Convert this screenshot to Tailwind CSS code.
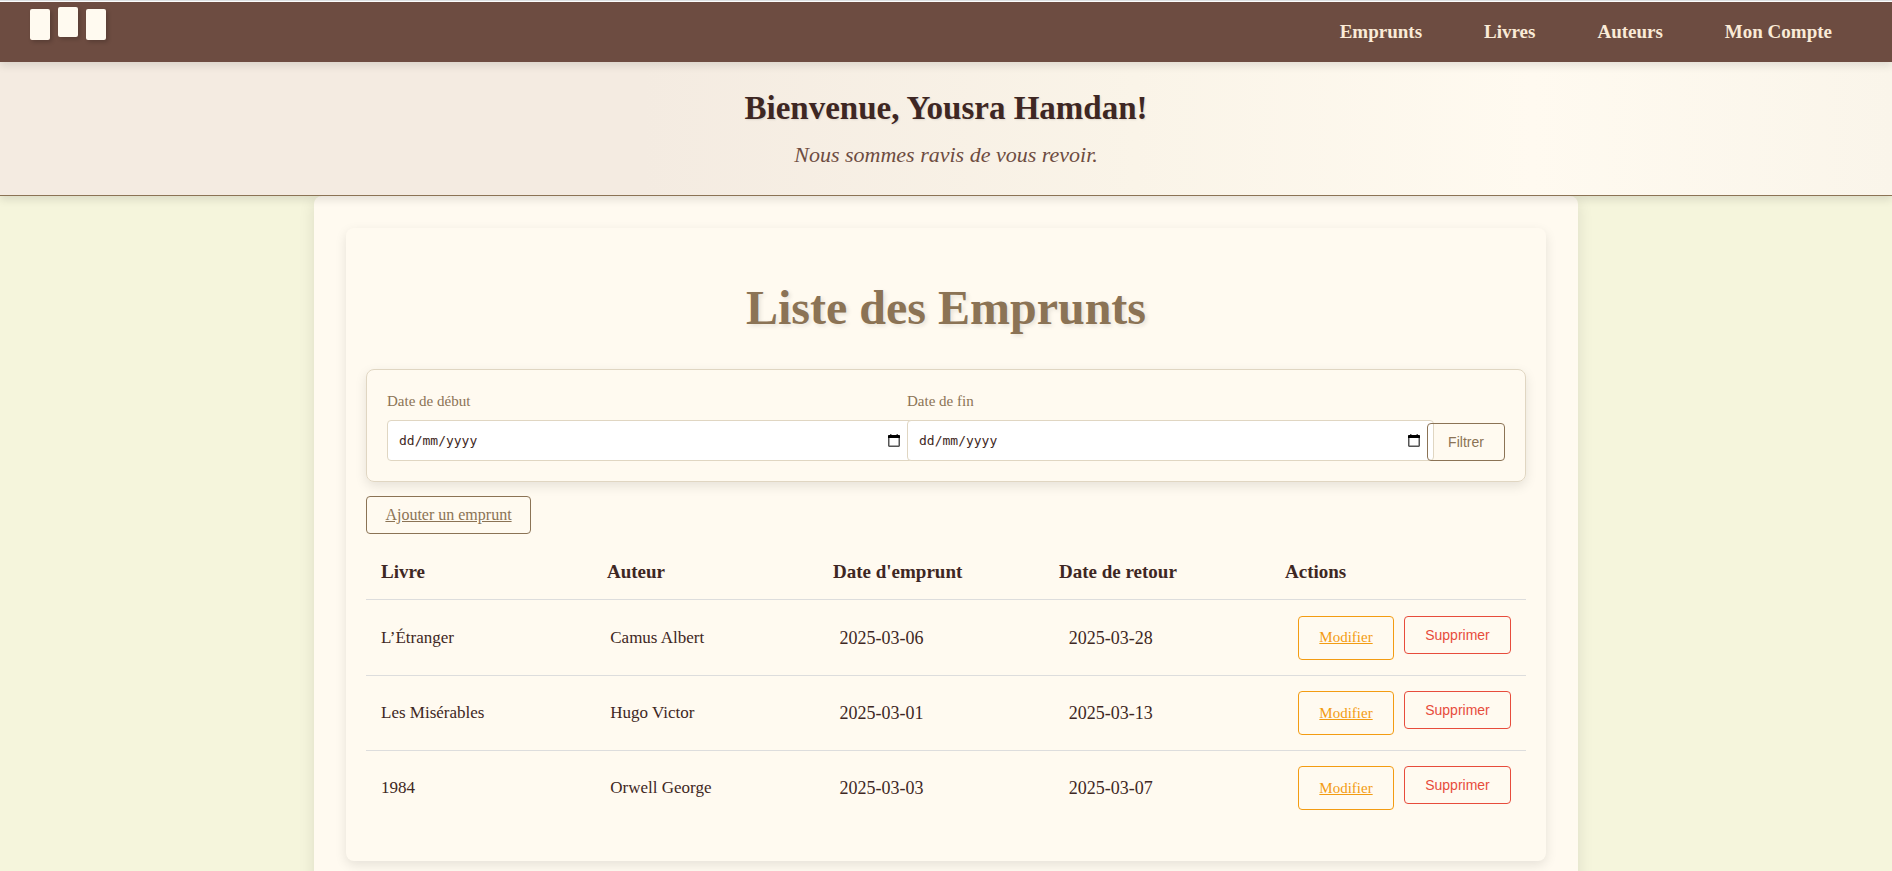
<!DOCTYPE html>
<html lang="fr">
<head>
<meta charset="utf-8">
<meta name="viewport" content="width=device-width, initial-scale=1">
<title>Liste des Emprunts</title>
<script src="https://cdn.jsdelivr.net/npm/@tailwindcss/browser@4"></script>
</head>
<body class="h-screen overflow-hidden bg-[#f5f5dc] font-['Liberation_Serif',serif] text-[#3e2723]">
  <div class="h-0.5 border-b border-white bg-[#dde1e3]"></div>

  <header class="relative z-20 flex h-15 justify-between bg-[#6d4c41] pr-15 pl-[30px] shadow-[0_4px_8px_rgba(0,0,0,0.1)]">
    <a href="#" aria-label="Accueil" class="flex items-start gap-2 pt-[5px]">
      <span class="mt-0.5 h-[31px] w-5 rounded-xs bg-[#fffaf0] shadow-[2px_2px_4px_rgba(0,0,0,0.2)]"></span>
      <span class="h-[30px] w-5 rounded-xs bg-[#fffaf0] shadow-[2px_2px_4px_rgba(0,0,0,0.2)]"></span>
      <span class="mt-0.5 h-[31px] w-5 rounded-xs bg-[#fffaf0] shadow-[2px_2px_4px_rgba(0,0,0,0.2)]"></span>
    </a>
    <nav class="flex items-center gap-[62px] text-[19px] font-bold text-[#faebd7]">
      <a href="#">Emprunts</a>
      <a href="#">Livres</a>
      <a href="#">Auteurs</a>
      <a href="#">Mon Compte</a>
    </nav>
  </header>

  <section class="relative z-10 border-b border-[#8b7355] bg-[linear-gradient(90deg,#f4ebe1_0%,#f4ebe1_34%,#faf4e8_60%,#fffaf0_81%,#faf5ea_100%)] pt-6 pb-6 text-center shadow-[0_4px_8px_rgba(0,0,0,0.1)]">
    <h2 class="text-[33px] leading-[44px] font-bold text-shadow-[1px_1px_2px_rgba(0,0,0,0.1)]">Bienvenue, Yousra Hamdan!</h2>
    <p class="mt-[9px] text-[22px] leading-8 text-[#6d4c41] italic">Nous sommes ravis de vous revoir.</p>
  </section>

  <main class="mx-auto max-w-[1264px] rounded-lg bg-[#fffaf0] p-8 shadow-[0_4px_16px_rgba(0,0,0,0.1)]">
    <div class="rounded-lg bg-[#fffaf0] px-5 pt-[50px] pb-9 shadow-[0_4px_12px_rgba(0,0,0,0.1)]">
      <h1 class="text-center text-5xl leading-[60px] font-bold text-[#8b7355] text-shadow-[2px_2px_4px_rgba(0,0,0,0.1)]">Liste des Emprunts</h1>

      <form class="mt-[31px] flex items-end rounded-lg border border-[#e0d6c2] p-5 shadow-[0_4px_12px_rgba(0,0,0,0.1)]">
        <div class="min-w-0 flex-1">
          <label for="debut" class="block text-[15px] leading-[22px] text-[#8b7355]">Date de début</label>
          <div class="relative mt-2 w-[calc(100%+7px)]">
            <input id="debut" type="text" placeholder="dd/mm/yyyy" class="block h-[41px] w-full rounded-sm border border-[#e0d6c2] bg-white px-[11px] font-['DejaVu_Sans_Mono',monospace] text-[13px] text-[#3e2723] placeholder:text-[#3e2723]">
            <svg class="absolute top-3.5 right-3.5 h-[13px] w-3" viewBox="0 0 12 13"><path d="M2 0h1.500v1h5V0H10v1h1l1 1v10l-1 1H1l-1-1V2l1-1h1z" fill="#555"/><path d="M.500 1h11l.5.500V4H0V1.500z" fill="#000"/><path d="M1.500 4h9v7.500h-9z" fill="#fff"/></svg>
          </div>
        </div>
        <div class="min-w-0 flex-1">
          <label for="fin" class="block text-[15px] leading-[22px] text-[#8b7355]">Date de fin</label>
          <div class="relative mt-2 w-[calc(100%+7px)]">
            <input id="fin" type="text" placeholder="dd/mm/yyyy" class="block h-[41px] w-full rounded-sm border border-[#e0d6c2] bg-white px-[11px] font-['DejaVu_Sans_Mono',monospace] text-[13px] text-[#3e2723] placeholder:text-[#3e2723]">
            <svg class="absolute top-3.5 right-3.5 h-[13px] w-3" viewBox="0 0 12 13"><path d="M2 0h1.500v1h5V0H10v1h1l1 1v10l-1 1H1l-1-1V2l1-1h1z" fill="#555"/><path d="M.500 1h11l.5.500V4H0V1.500z" fill="#000"/><path d="M1.500 4h9v7.500h-9z" fill="#fff"/></svg>
          </div>
        </div>
        <button type="submit" class="relative h-[38px] w-[78px] rounded-sm border border-[#8b7355] font-['Liberation_Sans',sans-serif] text-sm text-[#8b7355]">Filtrer</button>
      </form>

      <div class="mt-3.5 flex">
        <a href="#" class="flex h-[38px] w-[165px] items-center justify-center rounded-sm border border-[#8b7355] text-base text-[#8b7355] underline">Ajouter un emprunt</a>
      </div>

      <table class="block w-full">
        <thead class="block">
          <tr class="flex h-[66px] items-center border-b border-[#ddd] px-[15px] pt-3 text-left text-[19px]">
            <th class="flex-1">Livre</th>
            <th class="flex-1">Auteur</th>
            <th class="flex-1">Date d'emprunt</th>
            <th class="flex-1">Date de retour</th>
            <th class="flex-1">Actions</th>
          </tr>
        </thead>
        <tbody class="block">
          <tr class="flex h-[76px] items-center border-b border-[#ddd]">
            <td class="flex-1 px-[15px] text-[17px]">L’Étranger</td>
            <td class="flex-1 px-[15px] text-[17px]">Camus Albert</td>
            <td class="flex-1 px-[15px] text-lg">2025-03-06</td>
            <td class="flex-1 px-[15px] text-lg">2025-03-28</td>
            <td class="flex items-start gap-2.5 px-[15px]">
              <a href="#" class="flex h-11 w-24 items-center justify-center rounded-sm border border-[#f39c12] text-[15px] text-[#f39c12] underline">Modifier</a>
              <button type="button" class="h-[38px] w-[107px] rounded-sm border border-[#e74c3c] font-['Liberation_Sans',sans-serif] text-sm text-[#e74c3c]">Supprimer</button>
            </td>
          </tr>
          <tr class="flex h-[75px] items-center border-b border-[#ddd]">
            <td class="flex-1 px-[15px] text-[17px]">Les Misérables</td>
            <td class="flex-1 px-[15px] text-[17px]">Hugo Victor</td>
            <td class="flex-1 px-[15px] text-lg">2025-03-01</td>
            <td class="flex-1 px-[15px] text-lg">2025-03-13</td>
            <td class="flex items-start gap-2.5 px-[15px]">
              <a href="#" class="flex h-11 w-24 items-center justify-center rounded-sm border border-[#f39c12] text-[15px] text-[#f39c12] underline">Modifier</a>
              <button type="button" class="h-[38px] w-[107px] rounded-sm border border-[#e74c3c] font-['Liberation_Sans',sans-serif] text-sm text-[#e74c3c]">Supprimer</button>
            </td>
          </tr>
          <tr class="flex h-[74px] items-center">
            <td class="flex-1 px-[15px] text-[17px]">1984</td>
            <td class="flex-1 px-[15px] text-[17px]">Orwell George</td>
            <td class="flex-1 px-[15px] text-lg">2025-03-03</td>
            <td class="flex-1 px-[15px] text-lg">2025-03-07</td>
            <td class="flex items-start gap-2.5 px-[15px]">
              <a href="#" class="flex h-11 w-24 items-center justify-center rounded-sm border border-[#f39c12] text-[15px] text-[#f39c12] underline">Modifier</a>
              <button type="button" class="h-[38px] w-[107px] rounded-sm border border-[#e74c3c] font-['Liberation_Sans',sans-serif] text-sm text-[#e74c3c]">Supprimer</button>
            </td>
          </tr>
        </tbody>
      </table>
    </div>
  </main>
</body>
</html>
